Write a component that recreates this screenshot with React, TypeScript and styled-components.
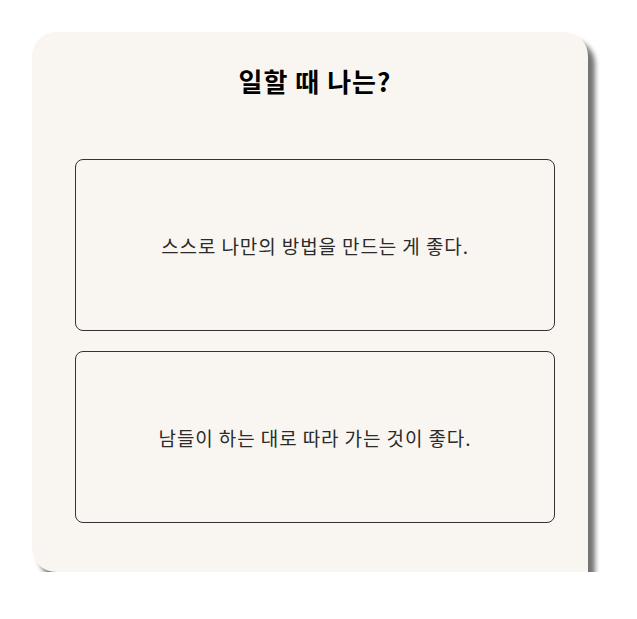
import React from "react";
import styled, { createGlobalStyle } from "styled-components";

const GlobalStyle = createGlobalStyle`
  * { box-sizing: border-box; }
  body {
    margin: 0;
    background: #fff;
    font-family: "Noto Sans CJK KR", "Noto Sans", sans-serif;
  }
`;

const options = [
    "스스로 나만의 방법을 만드는 게 좋다.",
    "남들이 하는 대로 따라 가는 것이 좋다.",
];

export default function App() {
    return (
        <>
            <GlobalStyle />
            <Page>
                <Card>
                    <Title>일할 때 나는?</Title>
                    <OptionList>
                        {options.map((text) => (
                            <Option key={text}>{text}</Option>
                        ))}
                    </OptionList>
                </Card>
            </Page>
        </>
    );
}

const Page = styled.div`
    padding: 32px 0 0 32px;
`;
const Card = styled.div`
    width: 556px;
    height: 540px;
    padding: 0 33px 0 43px;
    background: #f9f6f1;
    border-radius: 24px 24px 0 24px;
    box-shadow: 7px 8px 5px rgba(0, 0, 0, 0.55);
    display: flex;
    flex-direction: column;
`;
const Title = styled.h1`
    margin: 0;
    padding-top: 31px;
    height: 127px;
    text-align: center;
    font-size: 26px;
    font-weight: 700;
    letter-spacing: 1px;
    line-height: 36px;
    color: #000;
`;
const OptionList = styled.div`
    display: flex;
    flex-direction: column;
    gap: 20px;
`;
const Option = styled.button`
    width: 480px;
    height: 172px;
    border: 1px solid #333;
    border-radius: 8px;
    background: transparent;
    font-family: inherit;
    font-size: 19px;
    letter-spacing: 0.9px;
    color: #2b2b2b;
    cursor: pointer;
`;
